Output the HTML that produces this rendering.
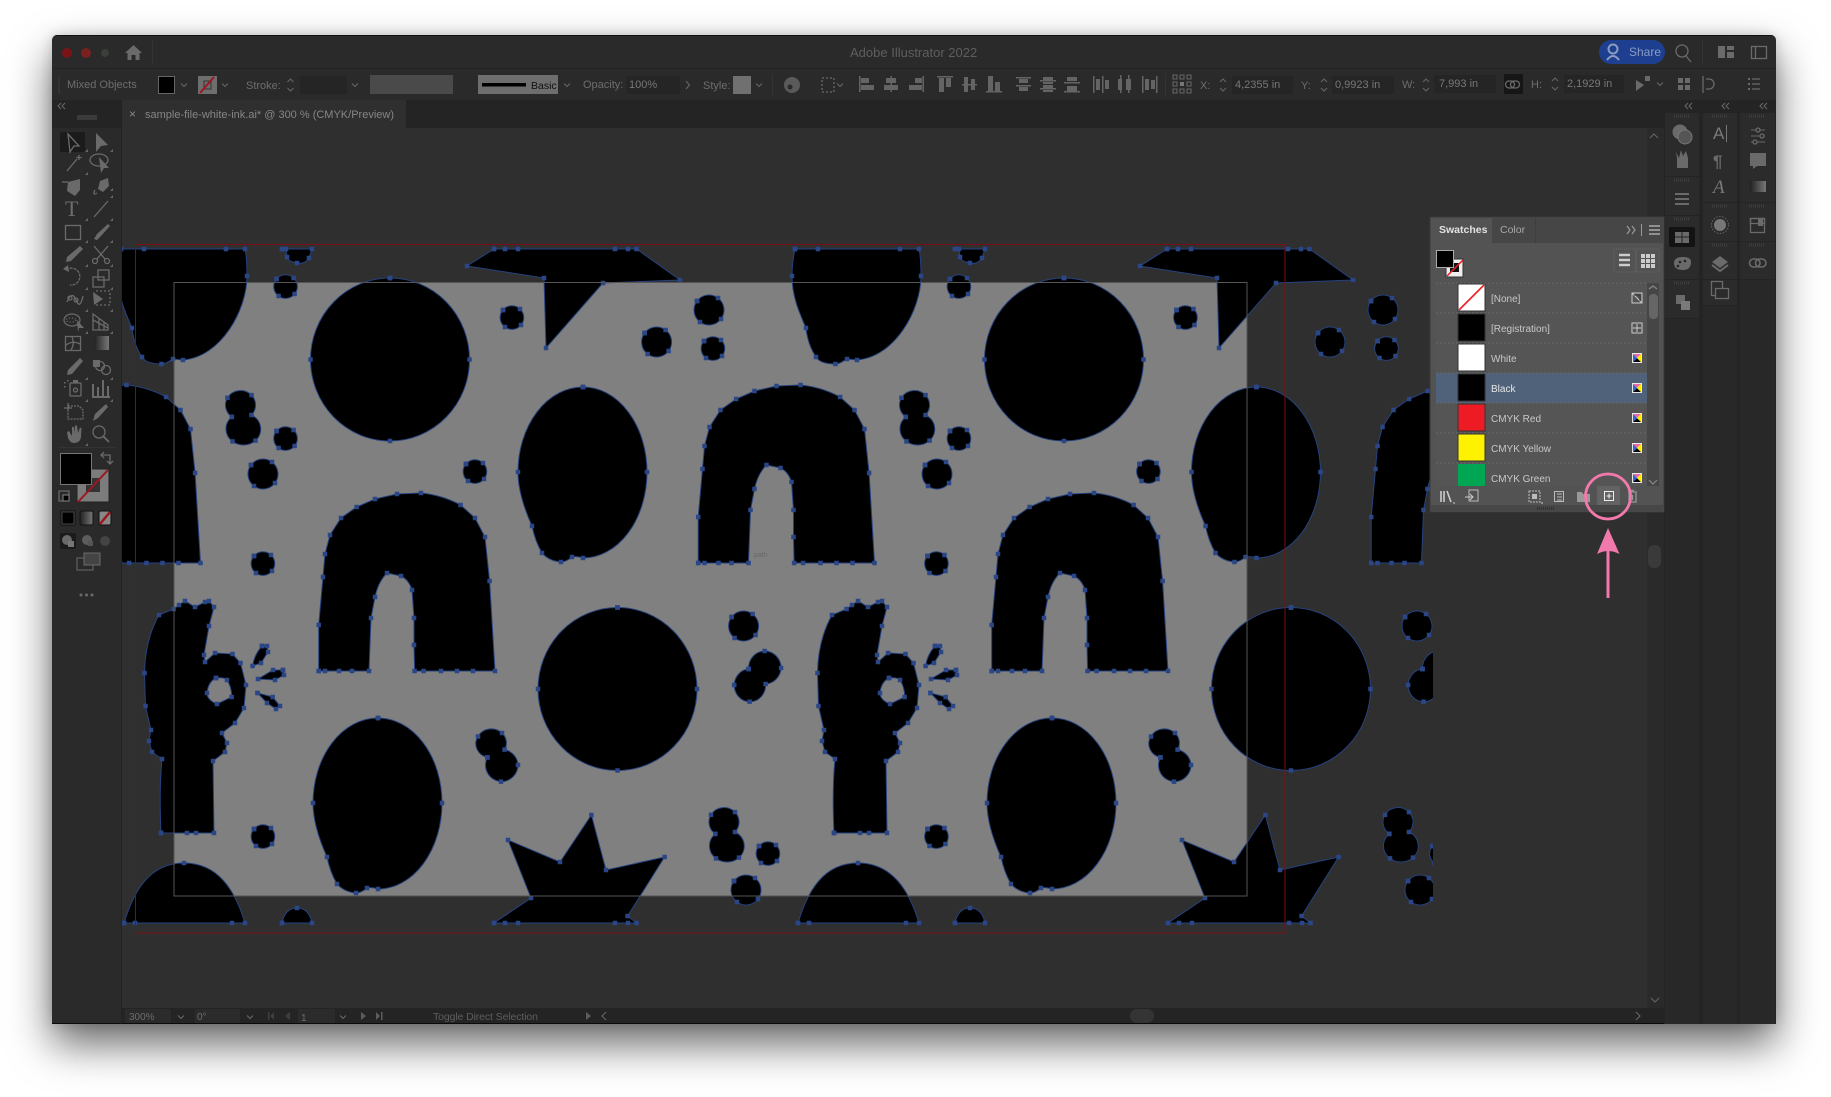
<!DOCTYPE html>
<html><head><meta charset="utf-8"><title>Adobe Illustrator 2022</title>
<style>
html,body{margin:0;padding:0;background:#fff;width:1831px;height:1097px;overflow:hidden}
#w{position:absolute;left:52px;top:35px;width:1724px;height:989px;background:#2a2a2a;border-radius:6px 6px 0 0;box-shadow:0 20px 42px rgba(0,0,0,.6),0 0 12px rgba(0,0,0,.16)}
svg{position:absolute;left:0;top:0}
text{font-family:"Liberation Sans",sans-serif;font-size:11px;fill:#6d6d6d}
.s{fill:#000;stroke:#25427f;stroke-width:1;fill-rule:evenodd;marker:url(#a)}
.i{fill:none;stroke:#6a6a6a;stroke-width:1.3}
.f{fill:#6a6a6a}
.c{fill:none;stroke:#666;stroke-width:1.1}
.p{fill:none;stroke:#bbb;stroke-width:1.2}
.t{font-size:10px;fill:#c8c8c8}
</style></head><body>
<div id="w"></div>
<svg width="1831" height="1097" viewBox="0 0 1831 1097" xmlns="http://www.w3.org/2000/svg">
<defs>
<marker id="a" markerUnits="userSpaceOnUse" markerWidth="5" markerHeight="5" refX="2.5" refY="2.5"><rect x=".25" y=".25" width="4.5" height="4.5" fill="#2a4686"/></marker>
<clipPath id="cv"><rect x="122" y="128" width="1311" height="880"/></clipPath>
<clipPath id="win"><path d="M52 41 Q52 35 58 35 H1770 Q1776 35 1776 41 V1024 H52Z"/></clipPath>
<linearGradient id="gr"><stop offset="0" stop-color="#222"/><stop offset="1" stop-color="#777"/></linearGradient>
<path id="ch" class="c" d="M-3-1.5L0 1.5L3-1.5"/>
<path id="sp" class="c" d="M-3-3L0-6L3-3M-3 3L0 6L3 3"/>
<g id="tri"><path d="M0 3L3 0V3Z" fill="#666"/></g>
<path id="bowl" class="s" d="M121 249L144 249L226 249L245 249C247 258 247 267 247 276C247 310 221 357 183 360L173 359C169 361 166 364 161.500 364C152 364 145 362 142 357C136 348 133 338 132 328C124 310 118 295 118 276C118 267 119 258 121 249Z"/>
<path id="cap" class="s" d="M282 249L312 249L309 258C306 263 301 264 297 263C292 262 288 261 287 257L286 249Z"/>
<path id="arrow" class="s" d="M494 249L505 249L518 249L615 249L628 249L636.500 249L680 280L603 283L546 348L544 278L467 266Z"/>
<path id="big" class="s" d="M0-81.500A79.500 81.500 0 0 1 79.500 0A79.500 81.500 0 0 1 0 81.500A79.500 81.500 0 0 1-79.500 0A79.500 81.500 0 0 1 0-81.500Z"/>
<path id="oval" class="s" d="M583 387A64 85 0 0 1 647 472A64 86 0 0 1 583 558Q577 556 572 557Q566 562 561 562Q549 561 542 553Q535 541 532 526Q518 495 518 472A65 85 0 0 1 583 387Z"/>
<path id="arch" class="s" d="M318.700 671L318.700 625L323 577L325 554L330 535L341 518L356.600 507L375 499L397 494L421 493Q442 495 460.600 505L475 518L485 537L489.600 581L495 671L473 671L457 671L441 671L423.600 671L414.600 671L414 645L414 618L412 590Q409 580 401 576L387 573Q378 582 375 597L371 618L369 671L352 671L339 671L325 671Z"/>
<path id="hand" class="s" d="M161 833L187 833L196 833L214 833L213 761L225 752L227 743L222 733L235 723L244 708L246 685L240.500 663L232.500 654L215 653L205 662L204 655L209 626L214 607L209 601L205 602L195 607L185 601L179 605L173.600 609L159 615Q145 640 144.500 673L145.500 706L151 730L149 741L152 752L162 759Q159 790 161 833ZM216 678Q224 677 227 680Q232 688 231.600 697L217 704Q207 700 207 693Q208 682 216 678ZM262 646L267 646L268 652L261 663L252.600 666Q254 655 262 646ZM283 670L284 675L275 680L258 679L273 670ZM257.500 693L272.700 697L280 706L276 709L267 703Z"/>
<path id="dome" class="s" d="M124 923C134 890 150 863 184 863C218 863 235 890 245 923L232 923L135 923Z"/>
<path id="sdome" class="s" d="M282 923C284 913 289 908 297 908C305 908 310 913 312 923Z"/>
<path id="star" class="s" d="M494 923L531 898L508 840L560 862L591.400 815L606 870L664.600 857L627.600 916L636.500 923L628 923L615 923L518 923L505 923Z"/>
<path id="d1" class="s" d="M-9-8A11.500 11.500 0 0 1 8-9A11.500 11.500 0 0 1 9 7A11.500 11.500 0 0 1-7 9A11.500 11.500 0 0 1-9-8Z"/>
<path id="d2" class="s" d="M-12-9A15 15 0 0 1 9-12A15 15 0 0 1 12 9A15 15 0 0 1-9 12A15 15 0 0 1-12-9Z"/>
<path id="dv" class="s" d="M-8.700 11.900A15 14.500 0 0 1-13-7.200A15 14.500 0 0 1 11-9.900A15 14.500 0 0 1 11 10A17.400 16 0 0 1 15 35.600A17.400 16 0 0 1-8 36.400A17.400 16 0 0 1-8.700 11.900Z"/>
<path id="dv2" class="s" d="M-3.600 14.900A15 14 0 0 1-13-6A15 14 0 0 1 11-9.500A15 14 0 0 1 13.600 7.100A17 16.700 0 0 1 27 22.500A17 16.700 0 0 1 10 39.200A17 16.700 0 0 1-3.600 14.900Z"/>
<path id="dd" class="s" d="M-16 1A16.500 17 0 0 1 0-17A16.500 17 0 0 1 16.500 0A16.500 17 0 0 1 1 16A15.400 16.700 0 0 1-15 33.700A15.400 16.700 0 0 1-30.400 17A15.400 16.700 0 0 1-16 1Z"/>
<g id="cm"><rect x="-5" y="-5" width="10" height="10" fill="#e8e8e8"/><path d="M-4-4H4L0 0Z" fill="#ee6aa7"/><path d="M-4 4H4L0 0Z" fill="#000"/><path d="M-4-4V4L0 0Z" fill="#36c"/><path d="M4-4V4L0 0Z" fill="#fe0"/></g>
</defs>
<g clip-path="url(#win)">
<rect x="52" y="35" width="1724" height="989" fill="#2a2a2a"/>
<rect x="52" y="35" width="1724" height="1" fill="#111"/>
<rect x="52" y="68" width="1724" height="1" fill="#232323"/>
<rect x="52" y="100" width="1724" height="28" fill="#242424"/>
<rect x="122" y="128" width="1525" height="880" fill="#2f2f2f"/>
<rect x="122" y="100" width="284" height="28" fill="#2f2f2f"/>
<rect x="1647" y="128" width="17" height="880" fill="#2a2a2a"/>
<rect x="122" y="1008" width="1654" height="16" fill="#242424"/>
<rect x="52" y="1023" width="1724" height="1" fill="#0a0a0a"/>
<rect x="121" y="100" width="1" height="924" fill="#222"/>

<!-- artboard + art -->
<g clip-path="url(#cv)">
<rect x="174" y="282" width="1073" height="614" fill="#808080"/>
<use href="#bowl"/><use href="#bowl" x="674"/>
<use href="#cap"/><use href="#cap" x="673"/>
<use href="#arrow"/><use href="#arrow" x="673"/>
<use href="#big" x="390" y="359.500"/><use href="#big" x="1064" y="359.500"/><use href="#big" x="617.500" y="689"/><use href="#big" x="1291" y="689"/>
<use href="#oval"/><use href="#oval" x="673.500"/><use href="#oval" x="-205" y="331"/><use href="#oval" x="469" y="331"/>
<use href="#arch"/><use href="#arch" x="673"/><use href="#arch" x="379.500" y="-108"/><use href="#arch" x="-294.500" y="-108"/><use href="#arch" x="1052.500" y="-108"/>
<use href="#hand"/><use href="#hand" x="673"/>
<use href="#dome"/><use href="#dome" x="674"/><use href="#sdome"/><use href="#sdome" x="673"/>
<use href="#star"/><use href="#star" x="674"/>
<use href="#d1" x="285.600" y="287"/><use href="#d1" x="512" y="318"/><use href="#d1" x="713" y="349"/><use href="#d1" x="285.600" y="439"/><use href="#d1" x="475" y="472"/><use href="#d1" x="263" y="564"/><use href="#d1" x="263" y="837"/><use href="#d1" x="768" y="854"/>
<use href="#d1" x="959" y="287"/><use href="#d1" x="1185.500" y="318"/><use href="#d1" x="1386.500" y="349"/><use href="#d1" x="959" y="439"/><use href="#d1" x="1148.500" y="472"/><use href="#d1" x="936.500" y="564"/><use href="#d1" x="936.500" y="837"/><use href="#d1" x="1441.500" y="854"/>
<use href="#d2" x="709" y="310"/><use href="#d2" x="656.600" y="342"/><use href="#d2" x="263" y="474"/><use href="#d2" x="743.600" y="626"/><use href="#d2" x="746" y="890"/>
<use href="#d2" x="1383" y="310"/><use href="#d2" x="1330" y="342"/><use href="#d2" x="937" y="474"/><use href="#d2" x="1417" y="626"/><use href="#d2" x="1420" y="890"/>
<use href="#dv" x="240.500" y="405"/><use href="#dv2" x="491" y="742.500"/><use href="#dv" x="724" y="822"/>
<use href="#dv" x="914.500" y="405"/><use href="#dv2" x="1164" y="742.500"/><use href="#dv" x="1398" y="822"/>
<use href="#dd" x="764.600" y="668"/><use href="#dd" x="1438.500" y="668"/>
<text x="754" y="557" style="font-size:7px;fill:#666">path</text>
<rect x="174" y="282.500" width="1073" height="613.500" fill="none" stroke="#555" stroke-width="1"/>
<rect x="135.500" y="244.500" width="1149.500" height="688.500" fill="none" stroke="#7a1015" stroke-width="1"/>
</g>

<!-- title bar -->
<circle cx="67" cy="53" r="5" fill="#7a1316"/><circle cx="86" cy="53" r="5" fill="#7a2020"/><circle cx="105" cy="53" r="4" fill="#3a3f3a"/>
<path class="f" d="M133.500 45L142 53H139.500V60H135.500V55H131.500V60H127.500V53H125Z"/>
<rect x="152" y="40" width="1" height="24" fill="#333"/>
<text x="850" y="57" style="font-size:13px;fill:#5e5e5e">Adobe Illustrator 2022</text>
<rect x="1599" y="40" width="66" height="24" rx="12" fill="#1e3f8f"/>
<circle cx="1613" cy="49" r="4.500" fill="none" stroke="#8a9cc4" stroke-width="2"/><path d="M1607 60Q1613 52 1619 60" fill="none" stroke="#8a9cc4" stroke-width="2"/>
<text x="1629" y="56" style="font-size:12px;fill:#8a9cc4">Share</text>
<circle cx="1682" cy="51" r="6" class="i"/><path class="i" d="M1686 56L1691 62"/>
<rect x="1702" y="40" width="1" height="24" fill="#333"/>
<path class="f" d="M1718 46H1725V58H1718ZM1727 46H1734V50H1727ZM1727 52H1734V58H1727Z"/>
<rect x="1751.500" y="46.500" width="15" height="12" class="i"/><path class="i" d="M1755.500 47V58"/>

<!-- control bar -->
<rect x="58" y="76" width="2" height="18" fill="#333"/>
<text x="67" y="88">Mixed Objects</text>
<rect x="158.500" y="76.500" width="16" height="17" fill="#000" stroke="#666"/>
<use href="#ch" x="184" y="85"/>
<rect x="198" y="76" width="19" height="18" fill="#6e6e6e"/><rect x="204" y="81" width="7" height="8" fill="none" stroke="#333"/><path d="M200 93L214 77" stroke="#a01520" stroke-width="2"/>
<use href="#ch" x="225" y="85"/>
<text x="246" y="89">Stroke:</text>
<use href="#sp" x="290.500" y="85"/>
<rect x="300" y="76" width="47" height="18" fill="#252525"/>
<use href="#ch" x="355" y="85"/>
<rect x="370" y="75" width="83" height="19" fill="#4a4a4a"/>
<rect x="478" y="75" width="80" height="19" fill="#6e6e6e"/><rect x="482" y="83" width="44" height="3.500" fill="#000"/>
<text x="531" y="89" style="font-size:10.500px;fill:#111">Basic</text>
<use href="#ch" x="567" y="85"/>
<text x="583" y="88">Opacity:</text>
<rect x="626" y="76" width="54" height="18" fill="#252525"/>
<text x="629" y="88" style="fill:#777">100%</text>
<path class="c" d="M686 81L689.500 85L686 89"/>
<text x="703" y="89">Style:</text>
<rect x="733" y="76" width="18" height="18" fill="#707070"/>
<use href="#ch" x="759" y="85"/>
<circle cx="792" cy="85" r="8" fill="#5a5a5a"/><circle cx="790" cy="87" r="2.500" fill="#2a2a2a"/>
<rect x="772" y="74" width="1" height="22" fill="#333"/>
<path class="i" stroke-dasharray="2 2" style="stroke-dasharray:2 2" d="M822 78H834V92H822Z"/><use href="#ch" x="840" y="85"/>
<path class="f" fill-opacity=".9" d="M859 76h1.500v16H859ZM861 78h8v5h-8ZM861 85h13v5h-13ZM890.500 76h1.500v16h-1.500ZM886 78h10v5h-10ZM884 85h14v5h-14ZM922.500 76h1.500v16h-1.500ZM915 78h7v5h-7ZM909 85h13v5h-13ZM937 76h16v1.500h-16ZM939 78h5v14h-5ZM946 78h5v9h-5ZM962 84h15v1.500h-15ZM964 77h4v15h-4ZM971 79h4v11h-4ZM986 91h16v1.500h-16ZM988 76h5v15h-5ZM995 82h5v9h-5ZM1016 77h15v1.500h-15ZM1019 79h9v4h-9ZM1019 87h9v4h-9ZM1016 85h15v1.500h-15ZM1040 80h16v1.500h-16ZM1043 77h10v3h-10ZM1043 82h10v2h-10ZM1040 88h16v1.500h-16ZM1043 85h10v3h-10ZM1043 90h10v2h-10ZM1064 82h16v1.500h-16ZM1067 77h10v4h-10ZM1064 91h16v1.500h-16ZM1067 86h10v5h-10ZM1093 76h1.500v17H1093ZM1096 79h4v11h-4ZM1102 76h1.500v17H1102ZM1105 80h4v9h-4ZM1118 79h4v11h-4ZM1120 75h1.500v18H1120ZM1128 75h1.500v18H1128ZM1126 79h5v11h-5ZM1142 76h1.500v17H1142ZM1145 79h4v11h-4ZM1156 76h1.500v17H1156ZM1151 80h4v9h-4Z"/>
<path class="c" d="M1173 75h4v4h-4ZM1180 75h4v4h-4ZM1187 75h4v4h-4ZM1173 82h4v4h-4ZM1187 82h4v4h-4ZM1173 89h4v4h-4ZM1180 89h4v4h-4ZM1187 89h4v4h-4Z"/><rect x="1180" y="82" width="4" height="4" fill="#777"/>
<rect x="1165" y="74" width="1" height="22" fill="#333"/>
<text x="1200" y="89">X:</text><use href="#sp" x="1223" y="85"/><rect x="1232" y="76" width="61" height="18" fill="#252525"/><text x="1235" y="88" style="fill:#777">4,2355 in</text>
<text x="1301" y="89">Y:</text><use href="#sp" x="1324" y="85"/><rect x="1332" y="76" width="62" height="18" fill="#252525"/><text x="1335" y="88" style="fill:#777">0,9923 in</text>
<text x="1402" y="88">W:</text><use href="#sp" x="1426" y="85"/><rect x="1434" y="75" width="62" height="18" fill="#252525"/><text x="1439" y="87" style="fill:#777">7,993 in</text>
<rect x="1504" y="74" width="19" height="20" fill="#161616"/><path class="i" d="M1511 81h-2a3 3 0 0 0 0 7h2a3 3 0 0 0 0-7M1516 81h-2a3 3 0 0 0 0 7h2a3 3 0 0 0 0-7"/>
<text x="1531" y="88">H:</text><use href="#sp" x="1555" y="84"/><rect x="1564" y="75" width="60" height="18" fill="#252525"/><text x="1567" y="87" style="fill:#777">2,1929 in</text>
<path class="f" d="M1636 80L1644 85L1636 91ZM1645 76h5v5h-5Z"/><use href="#ch" x="1660" y="84"/>
<path class="f" d="M1678 78h5v5h-5ZM1685 78h5v5h-5ZM1678 85h5v5h-5ZM1685 85h5v5h-5Z"/>
<path class="i" d="M1703 76V93M1706 79h3a5 5 0 0 1 0 10h-3"/>
<path class="i" d="M1752 79h8M1752 84h8M1752 89h8"/><path class="f" d="M1748 78h2v2h-2ZM1748 83h2v2h-2ZM1748 88h2v2h-2Z"/>

<!-- tab -->
<text x="129" y="118" style="font-size:12px;fill:#888">×</text>
<text x="145" y="118" style="fill:#868686" textLength="249">sample-file-white-ink.ai* @ 300 % (CMYK/Preview)</text>

<!-- left toolbar -->
<path class="c" d="M65 103L62 106L65 109M61 103L58 106L61 109"/>
<rect x="77" y="115" width="20" height="5" fill="#3a3a3a"/>
<rect x="60" y="132" width="25" height="20" rx="2" fill="#1b1b1b"/>
<path class="i" d="M68 134L79 146H74L70 152Z"/>
<path class="f" d="M96 133L108 145L101 146L96 152Z"/>
<path class="i" d="M67 171L77 159M79 155v5M76.500 157.500h5"/>
<ellipse cx="99" cy="160" rx="9" ry="6" class="i"/><path class="f" d="M99 157L109 168L104 168L101 173Z"/>
<path class="f" d="M68 182L80 179L80 190L75 196L67 191Z"/><path class="i" d="M62 182H68"/>
<path class="f" d="M100 181L108 178L109 186L103 192L98 189Z"/><path class="i" d="M95 190Q92 196 97 193"/>
<text x="65" y="216" style="font-family:'Liberation Serif',serif;font-size:22px;fill:#6e6e6e">T</text>
<path class="i" d="M94 217L108 201"/>
<rect x="65.500" y="225.500" width="15" height="14" class="i"/>
<path class="f" d="M108 224L110 226L101 236L97 240L94 239L97 234Z"/>
<path class="f" d="M80 246L83 249L71 261L66 262L67 257Z"/>
<circle cx="95" cy="261" r="2.500" class="i"/><circle cx="107" cy="261" r="2.500" class="i"/><path class="i" d="M97 259L108 246M105 259L94 246"/>
<path class="i" style="stroke-dasharray:3 1" d="M66 270A8.500 8.500 0 1 1 70 285"/><path class="f" d="M63 269L69 272L68 265Z"/>
<rect x="93" y="277" width="11" height="10" class="i"/><rect x="98" y="270" width="11" height="10" class="i"/>
<path class="i" d="M67 302Q72 290 76 300T83 296"/><circle cx="70" cy="298" r="2" class="i"/><circle cx="76" cy="300" r="2" class="i"/>
<path class="f" d="M93 292L103 299L94 305Z"/><path class="i" style="stroke-dasharray:2 2" d="M96 291H110V305H96"/>
<ellipse cx="72" cy="320" rx="8" ry="6" class="i"/><ellipse cx="71" cy="320" rx="5" ry="2" class="i" style="stroke-dasharray:1 2"/><path class="f" d="M77 320L84 328L79 328L78 332Z"/>
<path class="i" d="M93 314L108 325V330H93ZM93 320L108 328M99 318V330M104 322V330"/>
<rect x="65.500" y="336.500" width="15" height="14" class="i"/><path class="i" d="M66 345Q73 340 80 344M72 337Q75 344 71 350"/>
<rect x="94" y="336" width="15" height="14" fill="url(#gr)"/>
<path class="f" d="M80 358L83 361L72 374L67 375L68 370Z"/>
<rect x="93" y="360" width="7" height="7" class="f"/><circle cx="100" cy="366" r="4.500" class="i"/><circle cx="106" cy="370" r="4.500" class="i"/>
<rect x="70" y="383" width="11" height="13" rx="1" class="i"/><circle cx="75.500" cy="390" r="2" class="i"/><path class="f" d="M73 380h5v3h-5ZM64 382h1.500v1.500H64ZM67 380h1.500v1.500H67ZM64 386h1.500v1.500H64Z"/>
<path class="i" style="stroke-width:2" d="M93 396V384M98 396V387M103 396V380M108 396V386M92 397H110"/>
<path class="i" style="stroke-dasharray:2 1" d="M68 406H79L83 410V419H68Z"/><path class="i" d="M64 408H72M68 403V410"/>
<path class="f" d="M106 404L108 407L98 418L93 421L95 414Z"/>
<path class="f" d="M67 432L69 431L72 436V427L74 427L75 433V425.500L77 425.500L78 433L80 427.500L81.500 428L81 437Q80 443 74 443Q70 443 68 438Z"/>
<circle cx="99" cy="432" r="6" class="i"/><path class="i" style="stroke-width:1.800" d="M103.500 436.500L109 442"/>
<use href="#tri" x="85" y="149"/><use href="#tri" x="110" y="149"/><use href="#tri" x="85" y="172"/><use href="#tri" x="110" y="195"/><use href="#tri" x="85" y="218"/><use href="#tri" x="110" y="218"/><use href="#tri" x="85" y="240"/><use href="#tri" x="110" y="240"/><use href="#tri" x="85" y="264"/><use href="#tri" x="110" y="264"/><use href="#tri" x="85" y="287"/><use href="#tri" x="110" y="287"/><use href="#tri" x="85" y="309"/><use href="#tri" x="110" y="309"/><use href="#tri" x="85" y="331"/><use href="#tri" x="110" y="331"/><use href="#tri" x="85" y="377"/><use href="#tri" x="110" y="377"/><use href="#tri" x="85" y="399"/><use href="#tri" x="110" y="399"/><use href="#tri" x="85" y="443"/><use href="#tri" x="110" y="188"/>
<rect x="58" y="447" width="58" height="1" fill="#333"/>
<rect x="77" y="469" width="32" height="33" fill="#7c7c7c" stroke="#222"/><rect x="86" y="478" width="14" height="14" fill="#333"/>
<path d="M78 502L108 470" stroke="#a01520" stroke-width="2"/>
<rect x="60.500" y="453.500" width="31" height="31" fill="#000" stroke="#777"/>
<path class="i" d="M102 455H110V463M104 452L101 455L104 458M107 461L110 464L113 461"/>
<rect x="59" y="491" width="10" height="10" fill="none" stroke="#777"/><rect x="63" y="495" width="6" height="6" fill="#000" stroke="#888"/>
<rect x="60" y="510" width="16" height="16" rx="2" fill="#1b1b1b"/><rect x="62" y="512" width="12" height="12" fill="#000" stroke="#444"/>
<rect x="80" y="511" width="13" height="14" rx="2" fill="url(#gr)" stroke="#111"/>
<rect x="99" y="511" width="12" height="14" rx="2" fill="#888" stroke="#111"/><path d="M100 524L110 512" stroke="#a01520" stroke-width="2.500"/>
<rect x="60" y="533" width="16" height="16" rx="2" fill="#1b1b1b"/><circle cx="67" cy="540" r="5" class="f"/><rect x="68" y="541" width="6" height="6" fill="#777"/>
<circle cx="87" cy="540" r="5" class="f" fill-opacity=".8"/><rect x="88" y="541" width="5" height="5" fill="#555"/>
<circle cx="105" cy="541" r="5" fill="#444"/>
<rect x="77" y="558" width="16" height="12" fill="none" stroke="#6a6a6a"/><rect x="84" y="553" width="16" height="12" fill="#444" stroke="#6a6a6a"/>
<circle cx="81" cy="595" r="1.500" class="f"/><circle cx="86.500" cy="595" r="1.500" class="f"/><circle cx="92" cy="595" r="1.500" class="f"/>

<!-- vertical scrollbar -->
<path class="c" d="M1650 138L1654 134L1658 138"/><path class="c" d="M1651 998L1655 1002L1659 998"/>
<rect x="1648" y="545" width="13" height="23" rx="6" fill="#3a3a3a"/>

<!-- right docks -->
<rect x="1664" y="100" width="112" height="924" fill="#242424"/>
<path class="c" d="M1692 103L1689 106L1692 109M1688 103L1685 106L1688 109M1729 103L1726 106L1729 109M1725 103L1722 106L1725 109M1767 103L1764 106L1767 109M1763 103L1760 106L1763 109"/>
<rect x="1665" y="113" width="34" height="63" fill="#2b2b2b"/><rect x="1665" y="177" width="34" height="38" fill="#2b2b2b"/><rect x="1665" y="216" width="34" height="63" fill="#2b2b2b"/><rect x="1665" y="280" width="34" height="38" fill="#2b2b2b"/><rect x="1665" y="319" width="34" height="705" fill="#282828"/>
<rect x="1703" y="113" width="34" height="89" fill="#2b2b2b"/><rect x="1703" y="203" width="34" height="38" fill="#2b2b2b"/><rect x="1703" y="242" width="34" height="37" fill="#2b2b2b"/><rect x="1703" y="280" width="34" height="25" fill="#2b2b2b"/><rect x="1703" y="306" width="34" height="718" fill="#282828"/>
<rect x="1740" y="113" width="35" height="89" fill="#2b2b2b"/><rect x="1740" y="203" width="35" height="38" fill="#2b2b2b"/><rect x="1740" y="242" width="35" height="37" fill="#2b2b2b"/><rect x="1740" y="280" width="35" height="744" fill="#282828"/>
<path d="M1674 116h16M1674 180h16M1674 219h16M1674 283h16M1712 116h16M1712 206h16M1712 245h16M1749 116h16M1749 206h16M1749 245h16" stroke="#3c3c3c" stroke-width="3" stroke-dasharray="1 1" fill="none"/>
<circle cx="1680" cy="132" r="7.500" class="f"/><circle cx="1685" cy="137" r="7" fill="#555" stroke="#777"/>
<path class="f" d="M1676 152L1679 158L1681 150L1683 156L1686 151L1688 158V168H1677V158Z"/>
<path d="M1675 194H1689M1675 199H1689M1675 204H1689" stroke="#6a6a6a" stroke-width="2"/>
<rect x="1669" y="227" width="26" height="20" rx="2" fill="#131313"/><rect x="1675" y="232" width="14" height="11" fill="#6a6a6a"/><path d="M1682 232V243M1675 237H1689" stroke="#222"/>
<path class="f" d="M1674 263Q1674 257 1683 257Q1691 257 1691 262Q1691 270 1683 270Q1674 270 1674 263Z"/><circle cx="1680" cy="262" r="1.300" fill="#222"/><circle cx="1685" cy="261" r="1.300" fill="#222"/><circle cx="1678" cy="266" r="1.300" fill="#222"/>
<rect x="1676" y="295" width="9" height="9" class="f"/><rect x="1681" y="301" width="9" height="9" fill="#7a7a7a"/>
<text x="1713" y="139" style="font-size:17px;fill:#7a7a7a">A</text><rect x="1726" y="125" width="1" height="17" fill="#777"/>
<text x="1713" y="167" style="font-size:17px;font-weight:bold;fill:#6a6a6a">¶</text>
<text x="1713" y="193" style="font-family:'Liberation Serif',serif;font-style:italic;font-size:19px;fill:#7a7a7a">A</text>
<circle cx="1720" cy="225" r="6" fill="#777"/><circle cx="1720" cy="225" r="8.500" fill="none" stroke="#666" stroke-dasharray="1.500 1.500"/>
<path class="f" d="M1720 256L1728 262L1720 268L1712 262Z"/><path class="i" style="stroke-width:2" d="M1712 265L1720 271L1728 265"/>
<rect x="1711.500" y="281.500" width="11" height="14" class="i"/><rect x="1715.500" y="288.500" width="13" height="10" class="i" style="fill:#2b2b2b"/>
<path class="i" style="stroke-width:1" d="M1751 130h14M1751 136h14M1751 142h14"/><circle cx="1758" cy="130" r="2" class="i" style="fill:#2b2b2b"/><circle cx="1762" cy="136" r="2" class="i" style="fill:#2b2b2b"/><circle cx="1755" cy="142" r="2" class="i" style="fill:#2b2b2b"/>
<path class="f" d="M1750 153H1766V166H1757L1753 169V166H1750Z"/>
<rect x="1750" y="181" width="16" height="11" fill="url(#gr)"/>
<rect x="1750.500" y="218.500" width="14" height="14" class="i"/><rect x="1750.500" y="218.500" width="14" height="5" class="i"/><path class="f" d="M1758 218h5v8h-5Z"/>
<rect x="1749.500" y="259" width="10.500" height="8" rx="4" class="i" style="stroke-width:1.600"/><rect x="1755.500" y="259" width="10.500" height="8" rx="4" class="i" style="stroke-width:1.600"/>

<!-- status bar -->
<rect x="125" y="1009" width="46" height="14" fill="#2b2b2b"/><text x="129" y="1020" style="font-size:10px">300%</text><use href="#ch" x="181" y="1017"/>
<rect x="195" y="1009" width="45" height="14" fill="#2b2b2b"/><text x="197" y="1020" style="font-size:10px">0°</text><use href="#ch" x="250" y="1017"/>
<path fill="#3e3e3e" d="M268 1012h1.500v8H268ZM274 1012L270 1016L274 1020ZM290 1012L285 1016L290 1020Z"/>
<rect x="298" y="1009" width="37" height="14" fill="#2b2b2b"/><text x="301" y="1021" style="font-size:10px">1</text><use href="#ch" x="343" y="1017"/>
<path fill="#5c5c5c" d="M361 1012L366 1016L361 1020ZM376 1012L380 1016L376 1020ZM381 1012h1.500v8H381Z"/>
<text x="433" y="1020" style="font-size:10.500px;fill:#5e5e5e" textLength="105">Toggle Direct Selection</text>
<path fill="#5c5c5c" d="M586 1012L591 1016L586 1020Z"/>
<path class="c" d="M606 1012L602 1016L606 1020"/>
<rect x="1130" y="1009" width="24" height="14" rx="7" fill="#343434"/>
<path class="c" d="M1636 1012L1640 1016L1636 1020"/>

<!-- Swatches panel -->
<rect x="1430" y="217" width="234" height="295" fill="#535353" stroke="#3a3a3a"/>
<rect x="1431" y="218" width="233" height="25" fill="#464646"/>
<rect x="1431" y="218" width="61" height="25" fill="#535353"/>
<text x="1439" y="233" style="font-size:10.500px;font-weight:bold;fill:#e2e2e2">Swatches</text>
<text x="1500" y="233" style="font-size:10.500px;fill:#a8a8a8">Color</text>
<rect x="1535" y="218" width="1" height="25" fill="#3e3e3e"/>
<path d="M1627 226L1630 230L1627 234M1632 226L1635 230L1632 234" fill="none" stroke="#999" stroke-width="1.200"/>
<rect x="1641" y="224" width="1" height="12" fill="#999"/>
<path d="M1649 226h11M1649 230h11M1649 234h11" stroke="#aaa" stroke-width="1.500"/>
<rect x="1446" y="259" width="17" height="18" fill="#eee" stroke="#333"/><rect x="1450" y="263" width="9" height="9" fill="#111"/><path d="M1447 276L1463 260" stroke="#ee1c25" stroke-width="1.500"/>
<rect x="1436.500" y="250.500" width="17" height="17" fill="#000" stroke="#aaa"/>
<rect x="1614" y="249" width="22" height="23" rx="2" fill="none" stroke="#666" stroke-dasharray="1 1"/><rect x="1636" y="249" width="23" height="23" rx="2" fill="none" stroke="#666" stroke-dasharray="1 1"/>
<path d="M1619 255h11M1619 260h11M1619 265h11" stroke="#ccc" stroke-width="2.500"/>
<path fill="#ccc" d="M1641 254h4v4h-4ZM1646 254h4v4h-4ZM1651 254h4v4h-4ZM1641 259h4v4h-4ZM1646 259h4v4h-4ZM1651 259h4v4h-4ZM1641 264h4v4h-4ZM1646 264h4v4h-4ZM1651 264h4v4h-4Z"/>
<rect x="1436" y="283" width="211" height="203" fill="#555"/>
<rect x="1436" y="373" width="211" height="30" fill="#50617a"/>
<path d="M1436 283H1647M1436 313H1647M1436 343H1647M1436 373H1647M1436 403H1647M1436 433H1647M1436 463H1647" stroke="#666" stroke-dasharray="2 2" fill="none"/>
<rect x="1458" y="284" width="27" height="27" fill="#fff" stroke="#333"/><path d="M1459 310L1484 285" stroke="#ee1c25" stroke-width="1.600"/>
<rect x="1458" y="314" width="27" height="27" fill="#000" stroke="#333"/>
<rect x="1458" y="344" width="27" height="27" fill="#fff" stroke="#333"/>
<rect x="1458" y="374" width="27" height="27" fill="#000" stroke="#333"/>
<rect x="1458" y="404" width="27" height="27" fill="#ed1c24" stroke="#333"/>
<rect x="1458" y="434" width="27" height="27" fill="#fff200" stroke="#333"/>
<rect x="1458" y="464" width="27" height="22" fill="#00a651"/>
<text class="t" x="1491" y="302">[None]</text>
<text class="t" x="1491" y="332">[Registration]</text>
<text class="t" x="1491" y="362">White</text>
<text class="t" x="1491" y="392" style="fill:#e6e6e6">Black</text>
<text class="t" x="1491" y="422">CMYK Red</text>
<text class="t" x="1491" y="452">CMYK Yellow</text>
<text class="t" x="1491" y="482">CMYK Green</text>
<rect x="1632" y="293" width="10" height="10" fill="none" stroke="#ccc"/><path d="M1632 293L1642 303" stroke="#ccc"/><path d="M1634 295h6v6" fill="none" stroke="#333"/>
<rect x="1632" y="323" width="10" height="10" fill="none" stroke="#ccc"/><path d="M1637 324V332M1633 328H1641" stroke="#ccc"/>
<use href="#cm" x="1637" y="358"/><use href="#cm" x="1637" y="388"/><use href="#cm" x="1637" y="418"/><use href="#cm" x="1637" y="448"/><use href="#cm" x="1637" y="478"/>
<rect x="1647" y="283" width="12" height="203" fill="#464646"/>
<rect x="1649" y="294" width="9" height="25" rx="4" fill="#666"/>
<path d="M1649 289L1653 286L1657 289M1649 480L1653 484L1657 480" fill="none" stroke="#888" stroke-width="1.200"/>
<path d="M1441 491V502M1444 491V502M1447 491L1451 502" stroke="#ccc" stroke-width="1.600" fill="none"/><path d="M1453 503h2" stroke="#ccc"/>
<rect x="1469" y="490" width="9" height="11" fill="none" stroke="#bbb"/><path d="M1465 497H1473M1470 494L1473 497L1470 500" fill="none" stroke="#ccc"/>
<rect x="1529" y="491" width="11" height="11" fill="none" stroke="#bbb" stroke-dasharray="2 1"/><rect x="1532" y="494" width="5" height="5" fill="#bbb"/><path d="M1541 503h2" stroke="#ccc"/>
<rect x="1554.500" y="491.500" width="9" height="10" fill="none" stroke="#bbb"/><path d="M1557 494h5M1557 497h5M1557 500h5" stroke="#bbb"/>
<path fill="#999" d="M1577 492h5l1 2h7v8h-13Z"/>
<rect x="1597" y="486" width="23" height="19" fill="#636363"/>
<rect x="1604.500" y="491.500" width="9" height="9" fill="none" stroke="#eee"/><path d="M1609 493.500V498.500M1606.500 496H1611.500" stroke="#eee"/>
<path d="M1628 492H1637M1629 493V502H1636V493M1631 490.500H1634M1632.500 495V500" fill="none" stroke="#999" stroke-width="1.200"/>
<rect x="1431" y="505" width="233" height="7" fill="#474747"/>
<path d="M1537 508.500H1555" stroke="#333" stroke-width="3" stroke-dasharray="1 1"/>

<!-- pink annotation -->
<circle cx="1608" cy="496.500" r="22.500" fill="none" stroke="#f279ac" stroke-width="2.800"/>
<rect x="1606.500" y="550" width="3" height="48" fill="#f279ac"/>
<path d="M1608 528L1619.500 554Q1608 548 1597 554Z" fill="#f279ac"/>
</g>
</svg>
</body></html>
